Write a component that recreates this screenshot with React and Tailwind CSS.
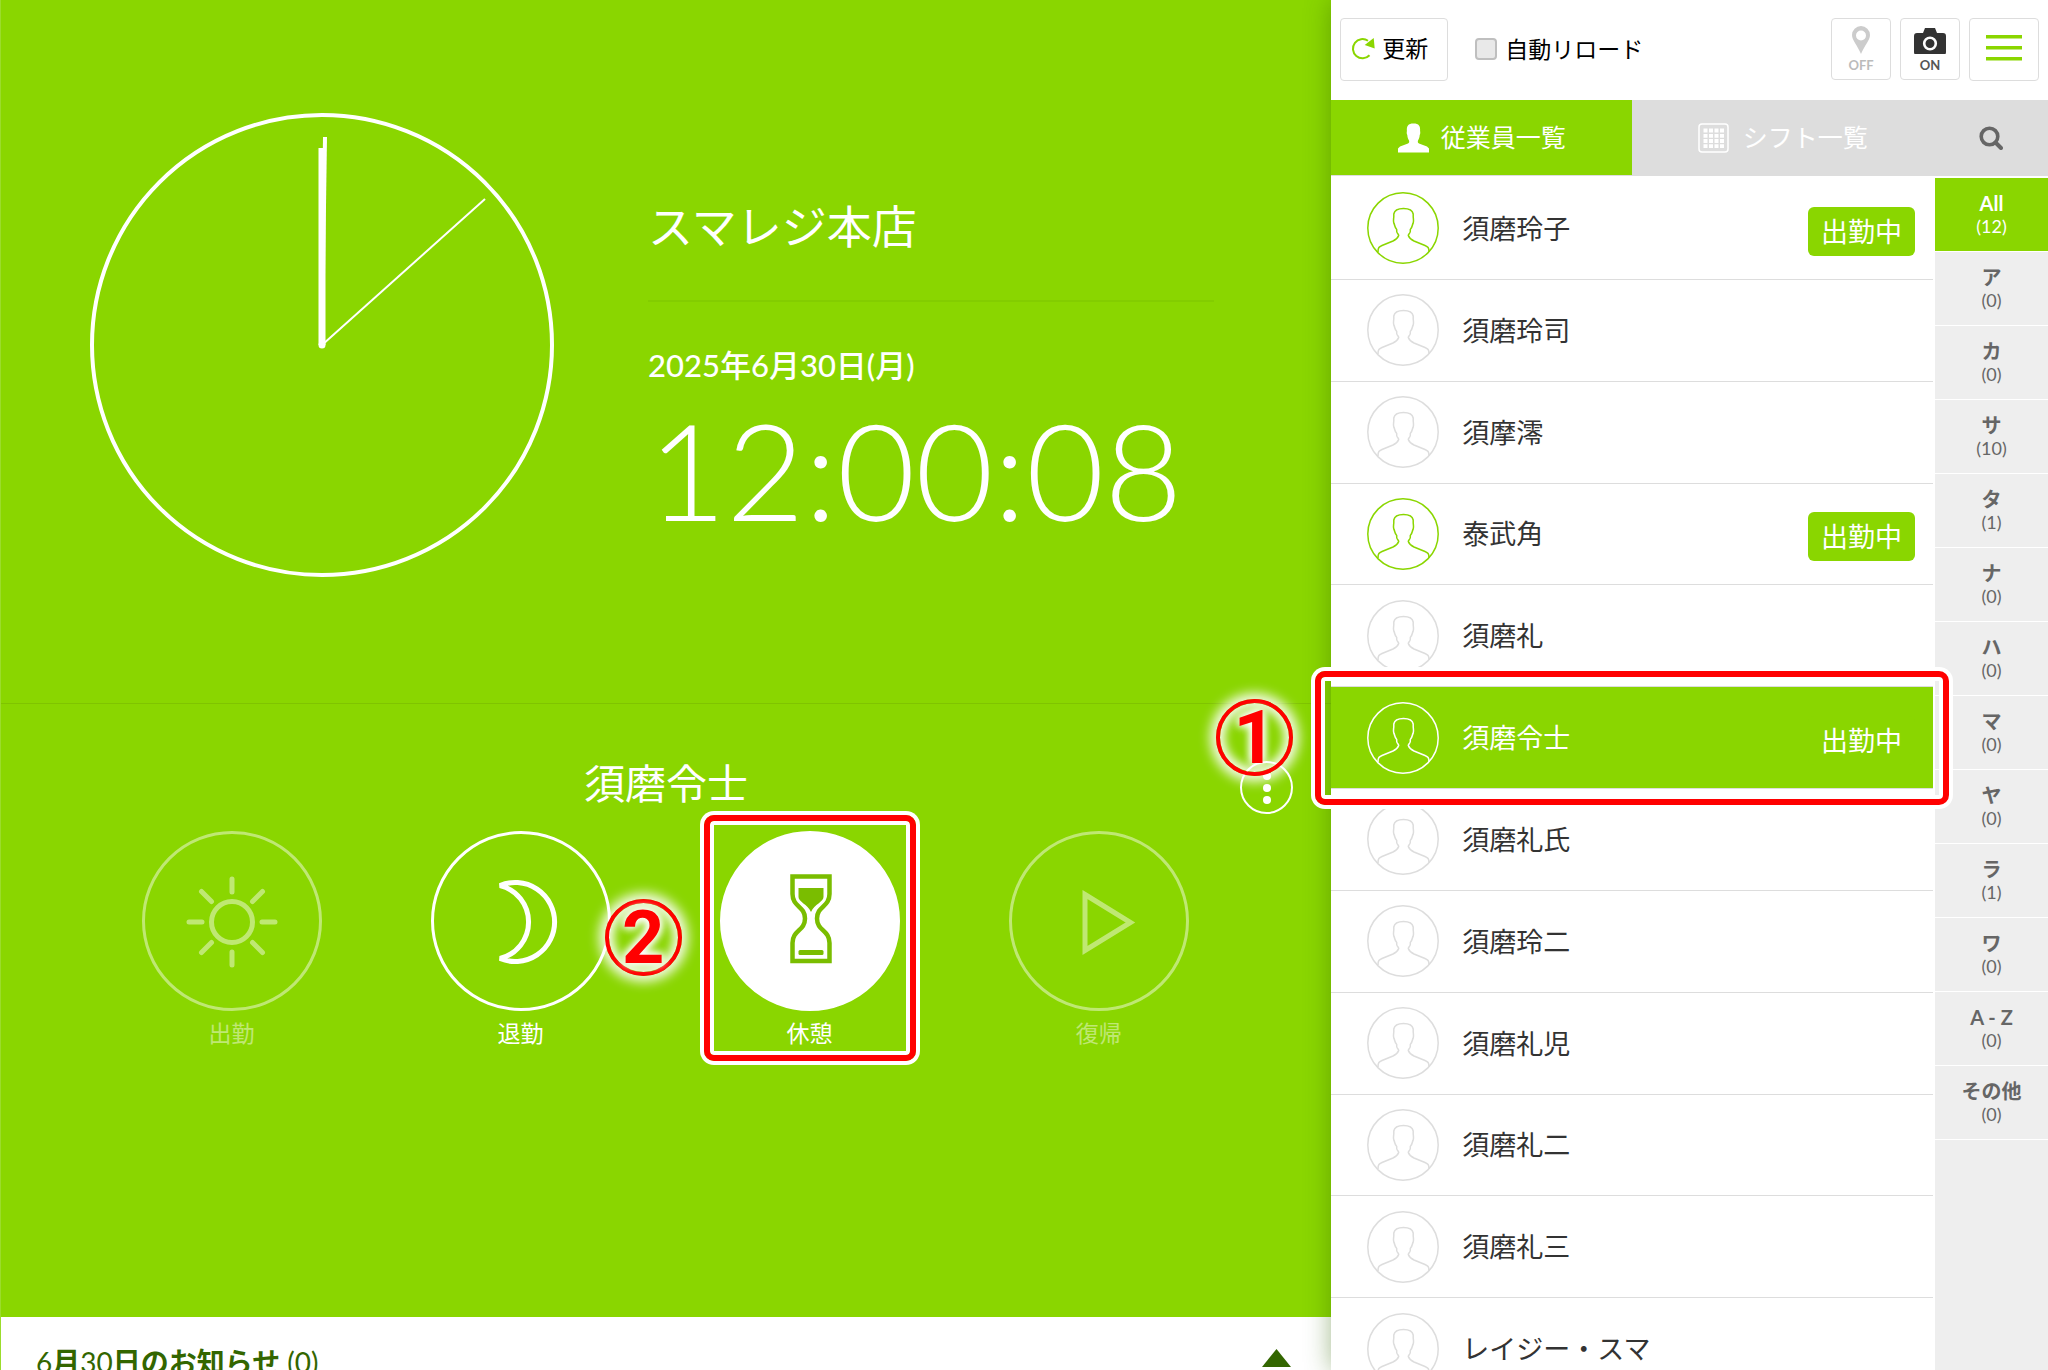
import React from "react";

const FRAME =
  "pointer-events-none absolute -inset-4 z-30 rounded-[10px] border-[6px] border-[#ff0000] shadow-[0_0_0_4px_#fff,inset_0_0_0_4px_#fff]";

function StepNumber({ children, className }) {
  return (
    <span
      className={
        "pointer-events-none absolute z-30 flex size-[77px] items-center justify-center rounded-full border-4 border-[#ff0000] font-['Roboto',sans-serif] text-[74px] leading-none font-bold text-[#ff0000] shadow-[0_0_12px_6px_rgba(255,255,255,0.9),inset_0_0_10px_5px_rgba(255,255,255,0.9)] [text-shadow:0_0_8px_#fff,0_0_8px_#fff,0_0_12px_#fff] " +
        className
      }
    >
      {children}
    </span>
  );
}

function AnalogClock() {
  return (
    <svg viewBox="0 0 464 464" className="size-[464px] shrink-0" fill="none" stroke="#fff" role="img" aria-label="12:00:08">
      <circle cx="232" cy="232" r="230" strokeWidth="4" />
      <path d="M232 232V35" strokeWidth="7" />
      <path d="M232 232 235 24" strokeWidth="4" />
      <path d="M232 232 395 86" strokeWidth="2" />
      <circle cx="232" cy="232" r="3.5" fill="#fff" stroke="none" />
    </svg>
  );
}

function Sun() {
  return (
    <g strokeWidth="5" strokeLinecap="round">
      <circle cx="90" cy="91" r="20.5" />
      <path d="M90 61V48M90 121v13M60 91H47M120 91h13M69.500 70.500 59.500 60.500M110.500 70.500l10-10M69.500 111.500l-10 10M110.500 111.500l10 10" />
    </g>
  );
}

function Moon() {
  return (
    <path strokeWidth="5" strokeLinejoin="bevel" d="M69 54.500A39.500 39.500 0 1 1 69 127.500A37.600 37.600 0 0 0 69 54.500Z" />
  );
}

function Hourglass() {
  return (
    <g stroke="#7abd00" strokeWidth="4.500">
      <path d="M72.500 45.500H109.500V63C109.500 76 97 75 97 87.500C97 100 109.500 99 109.500 112V130H72.500V112C72.500 99 85 100 85 87.500C85 75 72.500 76 72.500 63Z" />
      <path d="M78.500 57H103.500V66C103.500 71 94.500 73 91 81C87.500 73 78.500 71 78.500 66Z" fill="#7abd00" stroke="none" />
      <rect x="78.500" y="119" width="25" height="5" rx="1.500" fill="#7abd00" stroke="none" />
    </g>
  );
}

function Play() {
  return <path strokeWidth="5" d="M76 63.500 121.500 91.500 76 119.500Z" />;
}

function PunchButton({ label, icon, state, children }) {
  return (
    <button
      type="button"
      disabled={state === "disabled"}
      className="relative mx-auto block w-[180px] text-center text-white"
    >
      <span className={state === "disabled" ? "block opacity-45" : "block"}>
        <svg viewBox="0 0 180 180" className="block size-[180px]" fill="none" stroke="currentColor" aria-hidden="true">
          <circle cx="90" cy="90" r="88.5" strokeWidth="3" fill={state === "active" ? "#fff" : "none"} />
          {icon}
        </svg>
        <span className="mt-[10px] block text-[23px] leading-6">{label}</span>
      </span>
      {children}
    </button>
  );
}

function Avatar({ className }) {
  return (
    <svg viewBox="0 0 72 72" className={"size-[72px] shrink-0 " + className} fill="none" stroke="currentColor" strokeWidth="1.5" aria-hidden="true">
      <circle cx="36" cy="36" r="35.2" />
      <path d="M11 60C11 55.500 12 54.800 15 53.500L26 49C29 47.500 31 45.500 31.700 43.500C31.500 42 30 41.500 29.700 39.500V37.500C27.500 35.500 28 33 26.800 31C26 28 26.800 27 26.800 24.500V22C27.500 18 30.500 16.500 36.500 16.500C42.500 16.500 45.500 18 46.200 22V24.500C46.200 27 47 28 46.200 31C45 33 45.500 35.500 43.300 37.500V39.500C43 41.500 41.500 42 41.300 43.500C42 45.500 44 47.500 47 49L58 53.500C61 54.800 62 55.500 62 60" />
    </svg>
  );
}

const EMPLOYEES = [
  { name: "須磨玲子", working: true },
  { name: "須磨玲司" },
  { name: "須摩澪" },
  { name: "泰武角", working: true },
  { name: "須磨礼" },
  { name: "須磨令士", working: true, selected: true },
  { name: "須磨礼氏" },
  { name: "須磨玲二" },
  { name: "須磨礼児" },
  { name: "須磨礼二" },
  { name: "須磨礼三" },
  { name: "レイジー・スマ" },
];

const GROUPS = [
  ["All", 12],
  ["ア", 0],
  ["カ", 0],
  ["サ", 10],
  ["タ", 1],
  ["ナ", 0],
  ["ハ", 0],
  ["マ", 0],
  ["ヤ", 0],
  ["ラ", 1],
  ["ワ", 0],
  ["A - Z", 0],
  ["その他", 0],
];

function EmployeeRow({ name, working, selected }) {
  return (
    <li className="relative">
      <button
        type="button"
        className={
          "flex size-full items-center border-b border-[#ddd] pr-[18px] pl-9 text-left text-[27px] leading-[49px] " +
          (selected ? "bg-[#8ad600] text-white" : "text-[#333]")
        }
      >
        <Avatar className={selected ? "text-white" : working ? "text-[#8ad600]" : "text-[#ddd]"} />
        <span className="ml-[23px] flex-1">{name}</span>
        {working && <span className="mt-[6px] rounded-md bg-[#8ad600] px-[13px] text-white">出勤中</span>}
      </button>
      {selected && <span className={FRAME} />}
    </li>
  );
}

function Toolbar() {
  const box = "rounded-[4px] border border-[#ddd] bg-white";
  return (
    <header className="flex h-[100px] shrink-0 items-start gap-[9px] pt-[18px] pr-[9px] pl-[9px]">
      <button type="button" className={box + " flex h-[63px] w-[108px] items-center pb-[2px] pl-[10px] text-[23px] text-black"}>
        <svg viewBox="0 0 25 25" className="size-[25px]" fill="none" aria-hidden="true">
          <path d="M18.500 19.300A9.600 9.600 0 1 1 17 4.800" stroke="#8ad600" strokeWidth="2" />
          <path d="M22.700 2 23.700 12.500 13.700 9Z" fill="#8ad600" />
        </svg>
        <span className="ml-[6px]">更新</span>
      </button>
      <label className="ml-[18px] flex h-[62px] flex-1 items-center gap-2 text-[23px] text-black">
        <input
          type="checkbox"
          className="size-[22px] appearance-none rounded-[4px] border-2 border-[#bfbfbf] bg-[#e9e9e9]"
        />
        自動リロード
      </label>
      <button type="button" className={box + " flex h-[62px] w-[60px] flex-col items-center pt-[7px] text-[13px] leading-4 font-bold text-[#bbb]"}>
        <svg viewBox="0 0 18 28" className="h-7 w-[18px]" aria-hidden="true">
          <path fillRule="evenodd" fill="#ccc" d="M9 0a9 9 0 0 1 9 9c0 5-5.500 10.500-9 19C5.500 19.500 0 14 0 9a9 9 0 0 1 9-9Zm0 4.500a5 5 0 1 0 0 10 5 5 0 0 0 0-10Z" />
        </svg>
        <span className="mt-[3px]">OFF</span>
      </button>
      <button type="button" className={box + " flex h-[62px] w-[60px] flex-col items-center pt-[7px] text-[13px] leading-4 font-bold text-[#555]"}>
        <svg viewBox="0 0 32 28" className="h-7 w-8" aria-hidden="true">
          <path d="M3 7h6l2-5h10l2 5h6a3 3 0 0 1 3 3v16a3 3 0 0 1-3 3H3a3 3 0 0 1-3-3V10a3 3 0 0 1 3-3Z" fill="#333" />
          <circle cx="16" cy="17.500" r="5.800" fill="#333" stroke="#fff" strokeWidth="2.600" />
        </svg>
        <span className="mt-[3px]">ON</span>
      </button>
      <button type="button" aria-label="メニュー" className={box + " flex h-[63px] w-[70px] flex-col items-center gap-[7px] pt-[16px]"}>
        <span className="h-1 w-9 border-b border-[#c4ea80] bg-[#8ad600]" />
        <span className="h-1 w-9 border-b border-[#c4ea80] bg-[#8ad600]" />
        <span className="h-1 w-9 border-b border-[#c4ea80] bg-[#8ad600]" />
      </button>
    </header>
  );
}

function Tabs() {
  return (
    <nav className="flex h-[76px] shrink-0 bg-[#ddd] text-[25px] text-white">
      <button type="button" className="mb-px flex w-[42%] items-center justify-center gap-3 bg-[#8ad600]">
        <svg viewBox="0 0 31 30" className="h-[30px] w-[31px]" fill="#fff" aria-hidden="true">
          <path d="M0 29.500V25.500L2 23.500L10 20.500C11 20 11.500 19 11 17.500C10 15.500 9.500 14.500 9.300 12C8.500 10.500 8.700 9.500 8.900 8C8.500 3 10 .5 15.500 .5C21 .5 22.500 3 22.100 8C22.300 9.500 22.500 10.500 21.700 12C21.500 14.500 21 15.500 20 17.500C19.500 19 20 20 21 20.500L29 23.500L31 25.500V29.500Z" />
        </svg>
        従業員一覧
      </button>
      <button type="button" className="flex w-[42%] items-center justify-center gap-[14px]">
        <svg viewBox="0 0 31 30" className="h-[30px] w-[31px]" aria-hidden="true">
          <rect x="1" y="1" width="29" height="28" rx="3" fill="none" stroke="#fff" strokeWidth="1.500" />
          <path d="M5.500 7.500H26M5.500 12.800H26M5.500 18H26M5.500 23.200H26" stroke="#fff" strokeWidth="3.800" strokeDasharray="4 1.500" />
        </svg>
        シフト一覧
      </button>
      <button type="button" aria-label="検索" className="flex flex-1 items-center justify-center">
        <svg viewBox="0 0 24 24" className="size-6" fill="none" stroke="#666" aria-hidden="true">
          <circle cx="10.500" cy="10.500" r="8.300" strokeWidth="3.600" />
          <path d="M16.500 16.500 22 22" strokeWidth="4" strokeLinecap="round" />
        </svg>
      </button>
    </nav>
  );
}

export default function App() {
  return (
    <div className="flex h-screen overflow-hidden bg-white font-['Lato','Noto_Sans_CJK_JP',sans-serif]">
      <main className="flex w-[65%] flex-col border-l border-[#9bdc2c] bg-[#8ad600] text-white">
        <section className="flex h-[704px] shrink-0 border-b border-[#7fc400] pt-[113px] pr-[117px] pl-[89px]">
          <AnalogClock />
          <div className="ml-[94px] flex-1">
            <h1 className="border-b-2 border-[#83cd00] pt-[84px] pb-[43px] text-[45px] leading-[60px]">スマレジ本店</h1>
            <p className="mt-[43px] text-[31px] leading-10 font-medium">2025年6月30日(月)</p>
            <p className="text-[135px] leading-[168px] font-light">12:00:08</p>
          </div>
        </section>

        <section className="flex-1 pt-[53px]">
          <div className="grid grid-cols-[1fr_auto_1fr] items-start px-[38px]">
            <h2 className="col-start-2 text-[41px] leading-[54px]">須磨令士</h2>
            <div className="relative mt-1 size-[53px] justify-self-end">
              <button
                type="button"
                aria-label="その他の操作"
                className="flex size-[53px] flex-col items-center justify-center gap-1 rounded-full border-2 border-white"
              >
                <span className="size-2 rounded-full bg-white" />
                <span className="size-2 rounded-full bg-white" />
                <span className="size-2 rounded-full bg-white" />
              </button>
              <StepNumber className="right-0 bottom-[38px]">1</StepNumber>
            </div>
          </div>
          <div className="mt-[17px] grid grid-cols-4 pr-[88px] pl-[86px]">
            <PunchButton label="出勤" icon={<Sun />} state="disabled" />
            <PunchButton label="退勤" icon={<Moon />} />
            <PunchButton label="休憩" icon={<Hourglass />} state="active">
              <span className={FRAME} />
              <StepNumber className="top-[68px] right-[218px]">2</StepNumber>
            </PunchButton>
            <PunchButton label="復帰" icon={<Play />} state="disabled" />
          </div>
        </section>

        <footer className="flex h-[53px] shrink-0 items-start justify-between overflow-hidden bg-white pt-[25px] pr-10 pl-[35px] text-[28px] leading-10 text-[#336600]">
          <p>
            6<b>月</b>30<b>日のお知らせ</b> (0)
          </p>
          <svg viewBox="0 0 29 18" className="mt-[7px] h-[18px] w-[29px]" fill="#336600" aria-hidden="true">
            <path d="M14.500 0 29 18H0Z" />
          </svg>
        </footer>
      </main>

      <aside className="relative z-10 flex flex-1 flex-col bg-white shadow-[0_0_24px_rgba(51,102,0,0.45)]">
        <Toolbar />
        <Tabs />
        <div className="flex min-h-0 flex-1 gap-[2px] pt-[2px]">
          <ul className="grid h-[1222px] flex-1 auto-rows-fr">
            {EMPLOYEES.map((e) => (
              <EmployeeRow key={e.name} {...e} />
            ))}
          </ul>
          <ul className="w-[113px] bg-[#eee]">
            {GROUPS.map(([label, count], i) => (
              <li key={label}>
                <button
                  type="button"
                  className={
                    "flex h-[74px] w-full flex-col items-center justify-center border-b border-white text-[18px] leading-[23px] " +
                    (i === 0 ? "bg-[#8ad600] text-white" : "text-[#666]")
                  }
                >
                  <span className="text-[20px] font-bold">{label}</span>
                  <span>({count})</span>
                </button>
              </li>
            ))}
          </ul>
        </div>
      </aside>
    </div>
  );
}
